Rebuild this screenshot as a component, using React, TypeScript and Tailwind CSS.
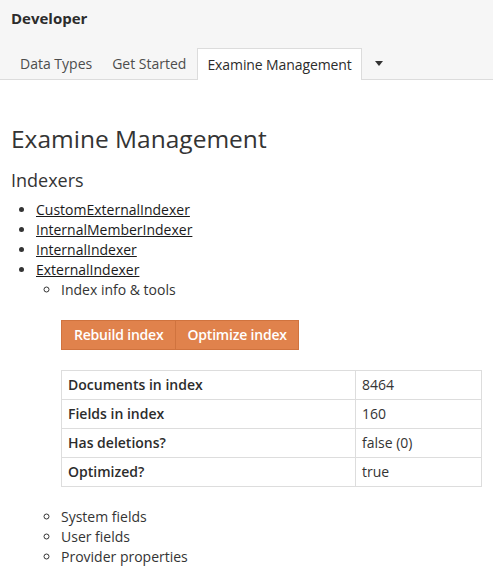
const indexers = ['CustomExternalIndexer', 'InternalMemberIndexer', 'InternalIndexer', 'ExternalIndexer'];

const stats = [
  ['Documents in index', '8464'],
  ['Fields in index', '160'],
  ['Has deletions?', 'false (0)'],
  ['Optimized?', 'true'],
];

export default function App() {
  return (
    <div className="min-h-[571px] bg-white text-[#343434] font-['Open_Sans',sans-serif]">
      <div className="h-[80px] bg-[#f6f6f6] border-b border-[#dcdcdc] flex flex-col">
        <div className="px-[11px] pt-[7px] text-[15px] leading-[22px] font-bold text-[#2c2c2c]">Developer</div>
        <div className="mt-auto flex items-end pl-[10px] text-[14px]">
          <div className="px-[10px] h-[31px] flex items-center text-[#4d4d4d]">Data Types</div>
          <div className="px-[10px] h-[31px] flex items-center text-[#4d4d4d]">Get Started</div>
          <div className="ml-[1px] px-[9px] h-[32px] -mb-[1px] flex items-center bg-white border border-b-0 border-[#dcdcdc] text-[#2c2c2c] tracking-[-0.1px]">
            Examine Management
          </div>
          <div className="h-[31px] w-[34px] flex items-center justify-center">
            <svg width="8" height="5" viewBox="0 0 8 5"><path d="M0 0h8L4 5z" fill="#333" /></svg>
          </div>
        </div>
      </div>

      <div className="px-[11px]">
        <h1 className="mt-[44px] text-[24.5px] leading-[30px] text-[#343434]">Examine Management</h1>
        <h2 className="mt-[14px] text-[18px] leading-[24px] text-[#343434]">Indexers</h2>
        <ul className="mt-[8px] pl-[25px] list-disc text-[14px] leading-[20px]">
          {indexers.map((name, i) => (
            <li key={name}>
              <a href="#" className="underline text-[#1a1a1a]">{name}</a>
              {i === indexers.length - 1 && (
                <ul className="pl-[25px] list-[circle]">
                  <li>
                    Index info &amp; tools
                    <div className="mt-[20px] flex">
                      <button className="h-[30px] px-[12px] bg-[#e0824c] border border-[#d0733e] text-white text-[14px] font-semibold tracking-[-0.2px]">
                        Rebuild index
                      </button>
                      <button className="h-[30px] px-[11px] bg-[#e0824c] border border-l-0 border-[#d0733e] text-white text-[14px] font-semibold tracking-[-0.2px]">
                        Optimize index
                      </button>
                    </div>
                    <table className="mt-[20px] mb-[20px] w-[421px] border-collapse border border-[#dddddd]">
                      <tbody>
                        {stats.map(([k, v]) => (
                          <tr key={k} className="h-[29px]">
                            <td className="w-[294px] border border-[#dddddd] px-[6px] font-semibold text-[#2c2c2c]">{k}</td>
                            <td className="border border-[#dddddd] px-[6px]">{v}</td>
                          </tr>
                        ))}
                      </tbody>
                    </table>
                  </li>
                  <li>System fields</li>
                  <li>User fields</li>
                  <li>Provider properties</li>
                </ul>
              )}
            </li>
          ))}
        </ul>
      </div>
    </div>
  );
}
